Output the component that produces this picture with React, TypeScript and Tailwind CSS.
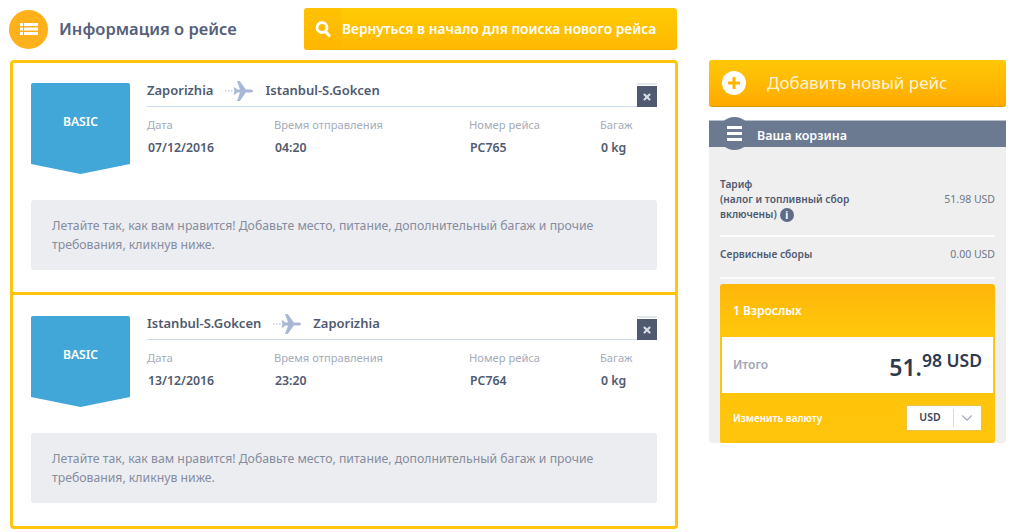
import { ChevronDown, X } from 'lucide-react';

const FONT = "font-['Noto_Sans',sans-serif]";

interface Flight {
  from: string;
  to: string;
  date: string;
  time: string;
  number: string;
}

const flights: Flight[] = [
  { from: 'Zaporizhia', to: 'Istanbul-S.Gokcen', date: '07/12/2016', time: '04:20', number: 'PC765' },
  { from: 'Istanbul-S.Gokcen', to: 'Zaporizhia', date: '13/12/2016', time: '23:20', number: 'PC764' },
];

function Plane() {
  return (
    <svg width="28" height="20" viewBox="0 0 28 20" className="shrink-0">
      <path d="M0 10h1.500M3 10h1.500M6 10h1.500" stroke="#a9b8d6" strokeWidth="1.200" fill="none" />
      <path
        d="M8.500 6.500h1.800l1.700 2h3L12 0h2.800l6 8.400h4.200c1.600 0 3 .7 3 1.600s-1.400 1.600-3 1.600h-4.200l-6 8.400H12l3-8.600h-3l-1.700 2H8.500l1-3.400z"
        fill="#a9b8d6"
      />
    </svg>
  );
}

function Basic() {
  return (
    <div className="w-[99px] h-[91px] shrink-0 relative">
      <svg width="99" height="91" viewBox="0 0 99 91" className="absolute inset-0">
        <path d="M2 0h95a2 2 0 0 1 2 2v79l-49.500 10L0 81V2a2 2 0 0 1 2-2z" fill="#41a6d8" />
      </svg>
      <div className="relative pt-[30px] text-center text-[12.200px] leading-[17px] font-semibold text-white">BASIC</div>
    </div>
  );
}

function InfoCol({ label, value, className }: { label: string; value: string; className: string }) {
  return (
    <div className={className}>
      <div className="text-[11.200px] leading-[16px] text-[#a5abba]">{label}</div>
      <div className="mt-[7px] ml-[1px] text-[12.300px] leading-[16px] font-semibold text-[#4f5a70]">{value}</div>
    </div>
  );
}

function FlightCard({ flight }: { flight: Flight }) {
  return (
    <div className="h-[232px] last:h-[231px] px-[18px] pt-[20px] last:pt-[21px]">
      <div className="flex gap-[17px]">
        <Basic />
        <div className="flex-1">
          <div className="flex items-start">
            <div className="flex-1 h-[24px] flex items-center gap-[12px] border-b border-[#cddcec] pb-[7px] text-[13px] font-semibold text-[#4f5a70]">
              <span>{flight.from}</span>
              <Plane />
              <span>{flight.to}</span>
            </div>
            <div className="w-[20px] h-[24px] border-t-[2px] border-[#e3e7ee] pt-[1px]">
              <div className="h-[21px] bg-[#4f5a70] flex items-center justify-center">
                <X size={10} strokeWidth={5} className="text-[#d8dce4]" />
              </div>
            </div>
          </div>
          <div className="flex pt-[10px]">
            <InfoCol label="Дата" value={flight.date} className="w-[127px]" />
            <InfoCol label="Время отправления" value={flight.time} className="w-[195px]" />
            <InfoCol label="Номер рейса" value={flight.number} className="w-[131px]" />
            <InfoCol label="Багаж" value="0 kg" className="flex-1" />
          </div>
        </div>
      </div>
      <div className="mt-[26px] h-[70px] rounded-[3px] bg-[#ecedf1] px-[21px] pt-[16px] text-[12.250px] leading-[19px] text-[#858c9e]">
        Летайте так, как вам нравится! Добавьте место, питание, дополнительный багаж и прочие
        <br />
        требования, кликнув ниже.
      </div>
    </div>
  );
}

function Cart() {
  return (
    <div className="mt-[13px] bg-[#efefef] rounded-b-[3px] h-[323px] flex flex-col">
      <div className="relative h-[27px] bg-[#6b7a90] border-t border-[#b7bfca] pl-[48px] pt-[5px] flex items-center text-[12.500px] font-semibold text-white">
        <div className="absolute left-[9px] top-[-4px] w-[33px] h-[33px] rounded-full bg-[#6b7a90] flex flex-col items-center justify-center gap-[3px]">
          <span className="w-[15px] h-[3px] bg-white" />
          <span className="w-[15px] h-[3px] bg-white" />
          <span className="w-[15px] h-[3px] bg-white" />
        </div>
        Ваша корзина
      </div>
      <div className="px-[11px] flex-1 flex flex-col">
        <div className="flex items-center justify-between pt-[30px] pb-[13px] border-b-2 border-white/80 text-[10.200px] leading-[15px]">
          <div className="font-semibold text-[#4f5a70]">
            Тариф
            <br />
            (налог и топливный сбор
            <br />
            <span className="inline-flex items-center gap-[3px]">
              включены)
              <span className="w-[14px] h-[14px] rounded-full bg-[#5f6c85] text-white text-[10px] leading-[14px] text-center font-bold">i</span>
            </span>
          </div>
          <div className="text-[10.500px] text-[#6f7789]">51.98 USD</div>
        </div>
        <div className="flex items-center justify-between h-[42px] pb-[4px] border-b-2 border-white/80 text-[10.200px]">
          <div className="font-semibold text-[#4f5a70]">Сервисные сборы</div>
          <div className="text-[10.500px] text-[#6f7789]">0.00 USD</div>
        </div>
        <div className="mt-[5px] flex-1 rounded-t-[3px] rounded-b-[2px] bg-[linear-gradient(180deg,#ffb60a_0%,#ffc60b_30%,#ffc40b_100%)] flex flex-col">
          <div className="h-[53px] pl-[13px] flex items-center text-[12px] font-semibold text-white">1 Взрослых</div>
          <div className="mx-[2px] h-[56px] bg-white pl-[11px] pr-[11px] flex items-center justify-between">
            <span className="text-[12px] font-semibold text-[#a0a6b6]">Итого</span>
            <span className="flex items-start font-semibold text-[#2f3a50]">
              <span className="text-[23px] leading-[32px] mt-[3px]">51.</span>
              <span className="text-[17.500px] leading-[24px]">98 USD</span>
            </span>
          </div>
          <div className="flex-1 pl-[13px] pr-[13px] flex items-center justify-between">
            <span className="text-[10px] font-semibold text-white">Изменить валюту</span>
            <div className="w-[76px] h-[26px] bg-white border border-[#e8c24a] flex items-center">
              <span className="w-[46px] text-center text-[10.500px] font-semibold text-[#3a4559]">USD</span>
              <span className="w-px h-[18px] bg-[#d9dce3]" />
              <ChevronDown size={18} strokeWidth={1.5} className="ml-[4px] text-[#a5abba]" />
            </div>
          </div>
        </div>
      </div>
    </div>
  );
}

export default function App() {
  return (
    <div className={`${FONT} w-[1024px] h-[532px] bg-white overflow-hidden flex pt-[8px] pl-[9px]`}>
      <div className="w-[669px] shrink-0">
        <div className="flex items-center h-[42px]">
          <div className="w-[39px] h-[39px] rounded-full bg-[#ffb11b] flex items-center justify-center">
            <svg width="18" height="12" viewBox="0 0 18 12">
              <path d="M0 0h3v3H0zM4 0h14v3H4zM0 4.500h3v3H0zM4 4.500h14v3H4zM0 9h3v3H0zM4 9h14v3H4z" fill="#fff" />
            </svg>
          </div>
          <div className="ml-[11px] w-[245px] text-[16.500px] font-semibold text-[#55607a] whitespace-nowrap">Информация о рейсе</div>
          <div className="w-[373px] h-[42px] rounded-[3px] bg-[linear-gradient(180deg,#ffcb05,#ffb800)] flex items-center text-white">
            <div className="w-[37px] h-full flex items-center justify-center bg-[#ffb300]/40 rounded-l-[3px]">
              <svg width="18" height="18" viewBox="0 0 18 18">
                <circle cx="8" cy="7.500" r="5" fill="none" stroke="#fff" strokeWidth="2.800" />
                <path d="M11.500 11.500l3.500 4" stroke="#fff" strokeWidth="3" strokeLinecap="round" />
              </svg>
            </div>
            <span className="ml-[1px] text-[13.750px] font-semibold whitespace-nowrap">Вернуться в начало для поиска нового рейса</span>
          </div>
        </div>
        <div className="mt-[10px] ml-[1px] w-[668px] h-[469px] border-[3px] border-[#ffc60b] rounded-[4px] divide-y-[3px] divide-[#ffc60b]">
          {flights.map((f) => (
            <FlightCard key={f.number} flight={f} />
          ))}
        </div>
      </div>
      <div className="ml-[31px] w-[297px] pt-[52px]">
        <div className="h-[47px] rounded-[3px] border-b border-[#d99a00] bg-[linear-gradient(180deg,#ffc807,#ffaa00)] flex items-center pl-[13px] text-white">
          <div className="w-[24px] h-[24px] rounded-full bg-white flex items-center justify-center">
            <svg width="12" height="12" viewBox="0 0 12 12">
              <path d="M4.500 0h3v4.500H12v3H7.500V12h-3V7.500H0v-3h4.500z" fill="#ffb300" />
            </svg>
          </div>
          <span className="ml-[21px] text-[17px] text-[#fff4d6]">Добавить новый рейс</span>
        </div>
        <Cart />
      </div>
    </div>
  );
}
